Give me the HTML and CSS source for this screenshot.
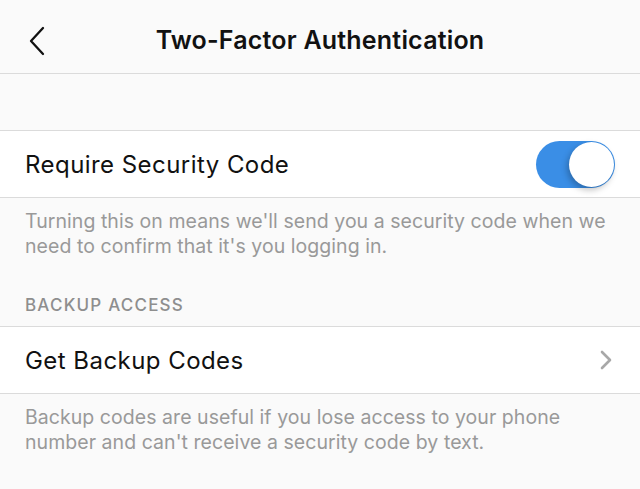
FILE: index.html
```html
<!DOCTYPE html>
<html lang="en">
<head>
    <meta charset="UTF-8">
    <meta name="viewport" content="width=device-width, initial-scale=1.0">
    <title>Two-Factor Authentication</title>
    <link rel="stylesheet" href="styles.css">
</head>
<body>
    <div class="header">
        <button class="back" aria-label="Back">
            <svg width="20" height="30" viewBox="0 0 20 30">
                <path d="M16 2 L4 15 L16 28" fill="none" stroke="#111" stroke-width="2.3" stroke-linecap="round" stroke-linejoin="round"/>
            </svg>
        </button>
        <h1>Two-Factor Authentication</h1>
    </div>

    <div class="spacer"></div>

    <div class="row">
        <span class="row-label">Require Security Code</span>
        <div class="toggle on">
            <div class="knob"></div>
        </div>
    </div>
    <p class="note">Turning this on means we'll send you a security code when we need to confirm that it's you logging in.</p>

    <div class="section-title">BACKUP ACCESS</div>

    <div class="row">
        <span class="row-label">Get Backup Codes</span>
        <svg class="chevron" width="14" height="22" viewBox="0 0 14 22">
            <path d="M3 3 L11 11 L3 19" fill="none" stroke="#a8a8a8" stroke-width="2.6" stroke-linecap="round" stroke-linejoin="round"/>
        </svg>
    </div>
    <p class="note">Backup codes are useful if you lose access to your phone number and can't receive a security code by text.</p>
</body>
</html>
```

FILE: styles.css
```css
body {
    margin: 0;
    background-color: #fafafa;
    font-family: Inter, "Liberation Sans", sans-serif;
    color: #111;
}
.header {
    height: 73px;
    border-bottom: 1px solid #dbdbdb;
    display: flex;
    align-items: center;
    justify-content: center;
    position: relative;
}
.header h1 {
    margin: 0;
    padding-top: 6px;
    font-size: 25px;
    font-weight: 600;
    letter-spacing: 0.2px;
}
.back {
    position: absolute;
    left: 27px;
    top: 26px;
    border: none;
    background: none;
    padding: 0;
}
.spacer {
    height: 56px;
}
.row {
    height: 66px;
    background-color: white;
    border-top: 1px solid #dbdbdb;
    border-bottom: 1px solid #dbdbdb;
    display: flex;
    align-items: center;
    justify-content: space-between;
    padding: 0 26px 0 25px;
}
.row-label {
    font-size: 24px;
    font-weight: 400;
    letter-spacing: 0.45px;
}
.toggle {
    width: 79px;
    height: 47px;
    border-radius: 24px;
    background-color: #3a8ee6;
    position: relative;
    margin-right: -1px;
}
.knob {
    position: absolute;
    right: 1px;
    top: 1px;
    width: 45px;
    height: 45px;
    border-radius: 50%;
    background-color: white;
    box-shadow: -2px 3px 6px rgba(0, 0, 0, 0.25);
}
.chevron {
    margin-right: 1px;
}
.note {
    margin: 0;
    padding: 11px 25px 0 25px;
    font-size: 19.5px;
    line-height: 25px;
    color: #999;
    letter-spacing: 0.05px;
}
.section-title {
    margin-top: 36px;
    padding: 0 25px;
    height: 31px;
    line-height: 20px;
    font-size: 17px;
    font-weight: 500;
    color: #8e8e8e;
    letter-spacing: 1.2px;
}
```
